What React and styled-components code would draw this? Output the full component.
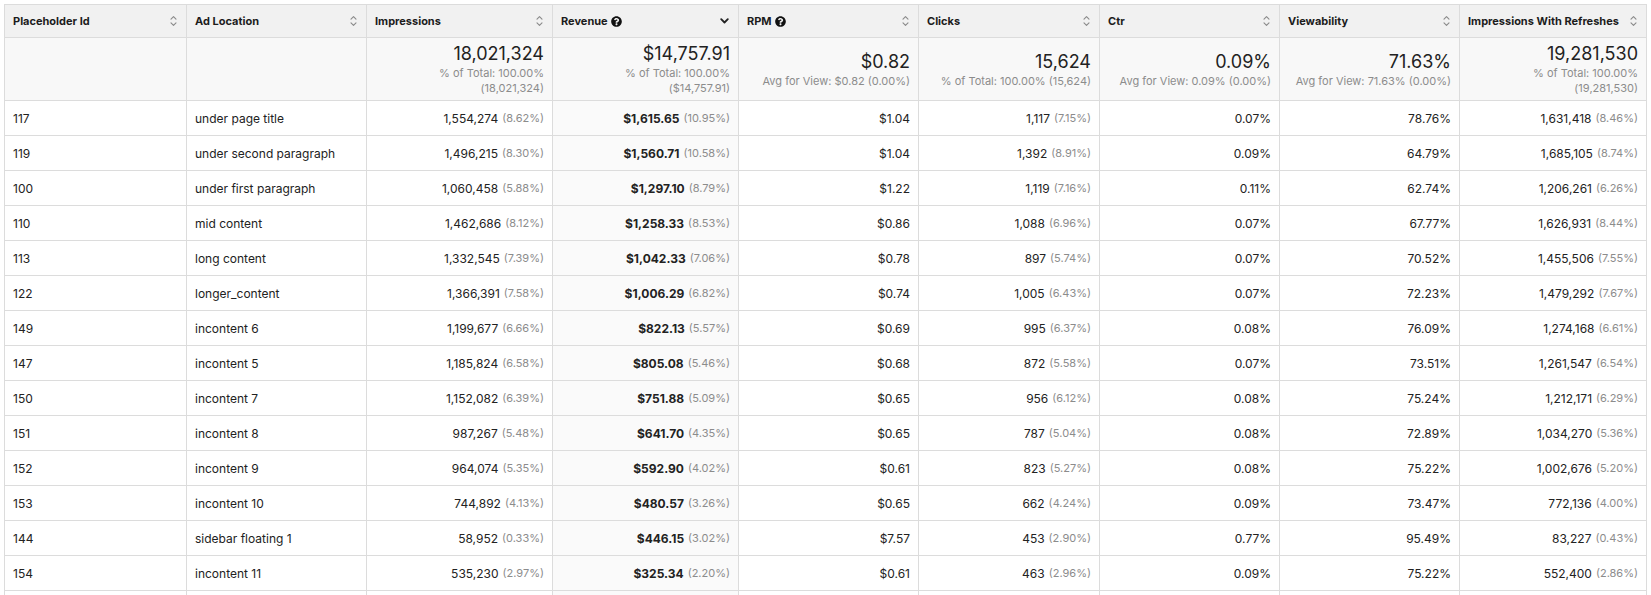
import React from "react";
import styled, { createGlobalStyle } from "styled-components";
import { FaQuestionCircle } from "react-icons/fa";

const Global = createGlobalStyle`
  html, body { margin: 0; padding: 0; background: #ffffff; }
  body { font-family: Inter, "Noto Sans", "Liberation Sans", sans-serif; color: #222; -webkit-font-smoothing: antialiased; }
`;

const COLS = [182, 180, 186, 186, 180, 181, 180, 180, 187];

const Page = styled.div`
  padding: 4px 0 0 4px;
`;

const Table = styled.div`
  display: grid;
  grid-template-columns: ${COLS.map((w) => w + "px").join(" ")};
  width: max-content;
  border-left: 1px solid #dcdcdc;
  border-top: 1px solid #dcdcdc;
`;

const HeadCell = styled.div`
  box-sizing: border-box;
  height: 33px;
  display: flex;
  align-items: center;
  justify-content: space-between;
  padding: 0 9px 0 8px;
  background: #f1f1f1;
  border-right: 1px solid #dcdcdc;
  border-bottom: 1px solid #dcdcdc;
  font-size: 11px;
  font-weight: 700;
  color: #1c1c1c;
  white-space: nowrap;
`;

const HeadLabel = styled.span`
  display: inline-flex;
  align-items: center;
  gap: 3px;
`;

const TotalCell = styled.div`
  box-sizing: border-box;
  height: 63px;
  display: flex;
  flex-direction: column;
  justify-content: center;
  align-items: flex-end;
  text-align: right;
  padding: 0 8px 0 8px;
  background: #f8f8f8;
  border-right: 1px solid #dcdcdc;
  border-bottom: 1px solid #dcdcdc;
`;

const BigValue = styled.div`
  font-size: 18px;
  line-height: 24px;
  font-weight: 400;
  color: #222;
`;

const SubValue = styled.div`
  font-size: 11px;
  line-height: 15px;
  color: #8c8c8c;
`;

const Cell = styled.div`
  box-sizing: border-box;
  height: 35px;
  display: flex;
  align-items: center;
  justify-content: ${(p) => (p.$left ? "flex-start" : "flex-end")};
  padding: 0 8px;
  background: ${(p) => (p.$sorted ? "#fafafa" : "#ffffff")};
  border-right: 1px solid #dcdcdc;
  border-bottom: 1px solid #dcdcdc;
  font-size: 12px;
  font-weight: ${(p) => (p.$bold ? 700 : 400)};
  color: #222;
  white-space: nowrap;
`;

const Pct = styled.span`
  margin-left: 4px;
  font-size: 11px;
  font-weight: 400;
  color: #8c8c8c;
`;

const SortIcon = () => (
  <svg width="7" height="12" viewBox="0 0 7 12" fill="none">
    <path d="M1 4.2 L3.5 1.7 L6 4.2" stroke="#8a8a8a" strokeWidth="1.1" strokeLinecap="round" strokeLinejoin="round" />
    <path d="M1 7.8 L3.5 10.3 L6 7.8" stroke="#8a8a8a" strokeWidth="1.1" strokeLinecap="round" strokeLinejoin="round" />
  </svg>
);

const SortedDesc = () => (
  <svg width="9" height="6" viewBox="0 0 9 6" fill="none">
    <path d="M1.2 1.2 L4.5 4.5 L7.8 1.2" stroke="#222" strokeWidth="1.8" strokeLinecap="round" strokeLinejoin="round" />
  </svg>
);

const HelpIcon = styled(FaQuestionCircle)`
  width: 11px;
  height: 11px;
  color: #111;
`;

const headers = [
  { label: "Placeholder Id" },
  { label: "Ad Location" },
  { label: "Impressions" },
  { label: "Revenue", help: true, sorted: true },
  { label: "RPM", help: true },
  { label: "Clicks" },
  { label: "Ctr" },
  { label: "Viewability" },
  { label: "Impressions With Refreshes" },
];

const totals = [
  null,
  null,
  { v: "18,021,324", s: "% of Total: 100.00% (18,021,324)" },
  { v: "$14,757.91", s: "% of Total: 100.00% ($14,757.91)" },
  { v: "$0.82", s: "Avg for View: $0.82 (0.00%)" },
  { v: "15,624", s: "% of Total: 100.00% (15,624)" },
  { v: "0.09%", s: "Avg for View: 0.09% (0.00%)" },
  { v: "71.63%", s: "Avg for View: 71.63% (0.00%)" },
  { v: "19,281,530", s: "% of Total: 100.00% (19,281,530)" },
];

const rows = [
  ["117", "under page title", "1,554,274", "8.62%", "$1,615.65", "10.95%", "$1.04", "1,117", "7.15%", "0.07%", "78.76%", "1,631,418", "8.46%"],
  ["119", "under second paragraph", "1,496,215", "8.30%", "$1,560.71", "10.58%", "$1.04", "1,392", "8.91%", "0.09%", "64.79%", "1,685,105", "8.74%"],
  ["100", "under first paragraph", "1,060,458", "5.88%", "$1,297.10", "8.79%", "$1.22", "1,119", "7.16%", "0.11%", "62.74%", "1,206,261", "6.26%"],
  ["110", "mid content", "1,462,686", "8.12%", "$1,258.33", "8.53%", "$0.86", "1,088", "6.96%", "0.07%", "67.77%", "1,626,931", "8.44%"],
  ["113", "long content", "1,332,545", "7.39%", "$1,042.33", "7.06%", "$0.78", "897", "5.74%", "0.07%", "70.52%", "1,455,506", "7.55%"],
  ["122", "longer_content", "1,366,391", "7.58%", "$1,006.29", "6.82%", "$0.74", "1,005", "6.43%", "0.07%", "72.23%", "1,479,292", "7.67%"],
  ["149", "incontent 6", "1,199,677", "6.66%", "$822.13", "5.57%", "$0.69", "995", "6.37%", "0.08%", "76.09%", "1,274,168", "6.61%"],
  ["147", "incontent 5", "1,185,824", "6.58%", "$805.08", "5.46%", "$0.68", "872", "5.58%", "0.07%", "73.51%", "1,261,547", "6.54%"],
  ["150", "incontent 7", "1,152,082", "6.39%", "$751.88", "5.09%", "$0.65", "956", "6.12%", "0.08%", "75.24%", "1,212,171", "6.29%"],
  ["151", "incontent 8", "987,267", "5.48%", "$641.70", "4.35%", "$0.65", "787", "5.04%", "0.08%", "72.89%", "1,034,270", "5.36%"],
  ["152", "incontent 9", "964,074", "5.35%", "$592.90", "4.02%", "$0.61", "823", "5.27%", "0.08%", "75.22%", "1,002,676", "5.20%"],
  ["153", "incontent 10", "744,892", "4.13%", "$480.57", "3.26%", "$0.65", "662", "4.24%", "0.09%", "73.47%", "772,136", "4.00%"],
  ["144", "sidebar floating 1", "58,952", "0.33%", "$446.15", "3.02%", "$7.57", "453", "2.90%", "0.77%", "95.49%", "83,227", "0.43%"],
  ["154", "incontent 11", "535,230", "2.97%", "$325.34", "2.20%", "$0.61", "463", "2.96%", "0.09%", "75.22%", "552,400", "2.86%"],
];

function Row({ r }) {
  const [id, loc, imp, impP, rev, revP, rpm, clk, clkP, ctr, view, iwr, iwrP] = r;
  return (
    <>
      <Cell $left>{id}</Cell>
      <Cell $left>{loc}</Cell>
      <Cell>{imp}{impP && <Pct>({impP})</Pct>}</Cell>
      <Cell $sorted $bold>{rev}{revP && <Pct>({revP})</Pct>}</Cell>
      <Cell>{rpm}</Cell>
      <Cell>{clk}{clkP && <Pct>({clkP})</Pct>}</Cell>
      <Cell>{ctr}</Cell>
      <Cell>{view}</Cell>
      <Cell>{iwr}{iwrP && <Pct>({iwrP})</Pct>}</Cell>
    </>
  );
}

export default function App() {
  return (
    <Page>
      <Global />
      <Table>
        {headers.map((h) => (
          <HeadCell key={h.label}>
            <HeadLabel>
              {h.label}
              {h.help && <HelpIcon />}
            </HeadLabel>
            {h.sorted ? <SortedDesc /> : <SortIcon />}
          </HeadCell>
        ))}
        {totals.map((t, i) => (
          <TotalCell key={i}>
            {t && <BigValue>{t.v}</BigValue>}
            {t && <SubValue>{t.s}</SubValue>}
          </TotalCell>
        ))}
        {rows.map((r) => (
          <Row key={r[0]} r={r} />
        ))}
        <Row r={["", "", "", "", "", "", "", "", "", "", "", "", ""]} />
      </Table>
    </Page>
  );
}
